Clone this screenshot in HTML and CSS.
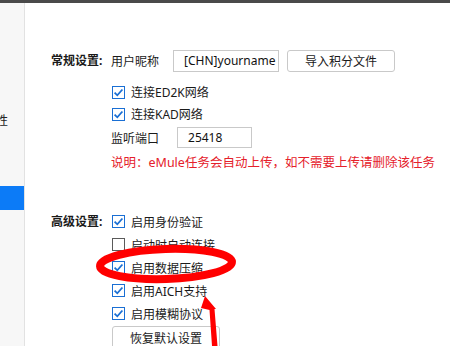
FILE: index.html
```html
<!DOCTYPE html>
<html lang="zh-CN">
<head>
<meta charset="utf-8">
<title>eMule 设置</title>
<link rel="stylesheet" href="styles.css">
</head>
<body>
<div class="topbar"></div>
<div class="window">
  <aside class="sidebar">
    <div class="side-item"><span>属性</span></div>
    <div class="side-item active"></div>
  </aside>
  <main class="main">
    <section class="section general">
      <div class="sec-label">常规设置:</div>
      <div class="sec-body">
        <div class="row row-first">
          <span class="field-label">用户昵称</span>
          <div class="input nick">[CHN]yourname</div>
          <button class="btn import">导入积分文件</button>
        </div>
        <label class="check-row"><span class="cb on"><svg viewBox="0 0 13 13"><rect x="0.5" y="0.5" width="12" height="12"/><path d="M2.6 6.6 L5.3 9.3 L10.4 3.5"/></svg></span>连接ED2K网络</label>
        <label class="check-row"><span class="cb on"><svg viewBox="0 0 13 13"><rect x="0.5" y="0.5" width="12" height="12"/><path d="M2.6 6.6 L5.3 9.3 L10.4 3.5"/></svg></span>连接KAD网络</label>
        <div class="row row-port">
          <span class="field-label">监听端口</span>
          <div class="input port">25418</div>
        </div>
        <p class="note">说明：eMule任务会自动上传，如不需要上传请删除该任务</p>
      </div>
    </section>
    <section class="section advanced">
      <div class="sec-label adv">高级设置:</div>
      <div class="sec-body">
        <label class="check-row adv-row"><span class="cb on"><svg viewBox="0 0 13 13"><rect x="0.5" y="0.5" width="12" height="12"/><path d="M2.6 6.6 L5.3 9.3 L10.4 3.5"/></svg></span>启用身份验证</label>
        <label class="check-row adv-row"><span class="cb off"><svg viewBox="0 0 13 13"><rect x="0.5" y="0.5" width="12" height="12"/></svg></span>启动时自动连接</label>
        <label class="check-row adv-row"><span class="cb on"><svg viewBox="0 0 13 13"><rect x="0.5" y="0.5" width="12" height="12"/><path d="M2.6 6.6 L5.3 9.3 L10.4 3.5"/></svg></span>启用数据压缩</label>
        <label class="check-row adv-row"><span class="cb on"><svg viewBox="0 0 13 13"><rect x="0.5" y="0.5" width="12" height="12"/><path d="M2.6 6.6 L5.3 9.3 L10.4 3.5"/></svg></span>启用AICH支持</label>
        <label class="check-row adv-row"><span class="cb on"><svg viewBox="0 0 13 13"><rect x="0.5" y="0.5" width="12" height="12"/><path d="M2.6 6.6 L5.3 9.3 L10.4 3.5"/></svg></span>启用模糊协议</label>
        <button class="btn reset">恢复默认设置</button>
      </div>
    </section>
  </main>
</div>
<svg class="annot" viewBox="0 0 450 346" width="450" height="346">
  <ellipse cx="166" cy="264" rx="66" ry="15" transform="rotate(-1.8 166 264)" fill="none" stroke="#ff0000" stroke-width="8"/>
  <polygon points="205,296 216,309 214.5,309 217.5,346 212,346 209.5,310 201,308" fill="#ff0000"/>
</svg>
</body>
</html>
```

FILE: styles.css
```css
html, body {
  margin: 0;
  padding: 0;
  background: #ffffff;
}
body {
  width: 450px;
  height: 346px;
  overflow: hidden;
  position: relative;
  font-family: "Noto Sans", "Noto Sans CJK SC", sans-serif;
  font-size: 12px;
  color: #1a1a1a;
}
.topbar {
  height: 3px;
  background: #4a4a4a;
}
.window {
  display: flex;
  height: 343px;
}
.sidebar {
  width: 25px;
  flex: none;
  background: #f7f7f7;
  border-right: 1px solid #e2e2e2;
  padding-top: 105px;
  box-sizing: border-box;
  display: flex;
  flex-direction: column;
}
.side-item {
  height: 24px;
  display: flex;
  align-items: center;
  justify-content: flex-end;
  padding-right: 16px;
  overflow: hidden;
  white-space: nowrap;
  color: #222;
}
.side-item span {
  flex: none;
}
.side-item.active {
  margin-top: 54px;
  background: #0c7bf7;
}
.main {
  flex: 1;
  padding-left: 26px;
}
.section {
  display: grid;
  grid-template-columns: 60px auto;
}
.general {
  margin-top: 47px;
}
.advanced {
  margin-top: 38px;
}
.sec-label {
  font-weight: bold;
  height: 22px;
  line-height: 22px;
  color: #1a1a1a;
}
.adv {
  height: 23px;
  line-height: 23px;
}
.sec-body {
  display: flex;
  flex-direction: column;
  align-items: flex-start;
}
.row {
  display: flex;
  align-items: center;
}
.row-first {
  height: 22px;
  margin-bottom: 9px;
}
.field-label {
  color: #1a1a1a;
}
.input {
  box-sizing: border-box;
  border: 1px solid #c9c9c9;
  background: #fff;
  padding-left: 10px;
  overflow: hidden;
  white-space: nowrap;
  color: #111;
}
.nick {
  width: 106px;
  height: 22px;
  line-height: 20px;
  margin-left: 14px;
}
.port {
  width: 75px;
  height: 21px;
  line-height: 19px;
  margin-left: 18px;
}
.btn {
  box-sizing: border-box;
  font: inherit;
  color: #1a1a1a;
  background: #ffffff;
  border: 1px solid #c9c9c9;
  border-radius: 3px;
  padding: 0;
}
.import {
  width: 108px;
  height: 22px;
  margin-left: 8px;
}
.check-row {
  height: 22px;
  display: flex;
  align-items: center;
  gap: 6px;
  margin-left: 1px;
  color: #1a1a1a;
}
.adv-row {
  height: 23px;
}
.cb {
  width: 13px;
  height: 13px;
  display: block;
  flex: none;
}
.cb svg {
  width: 13px;
  height: 13px;
  display: block;
}
.cb rect {
  fill: #ffffff;
  stroke: #1a6fd4;
  stroke-width: 1;
}
.cb path {
  fill: none;
  stroke: #1a6fd4;
  stroke-width: 1.8;
}
.cb.off rect {
  stroke: #5a5a5a;
}
.row-port {
  height: 21px;
  margin-top: 2px;
}
.note {
  margin: 6px 0 0 0;
  height: 18px;
  line-height: 18px;
  color: #e5202a;
  font-size: 12.5px;
  white-space: nowrap;
}
.reset {
  width: 108px;
  height: 24px;
  margin-top: 1px;
  margin-left: 1px;
}
.annot {
  position: absolute;
  left: 0;
  top: 0;
  pointer-events: none;
}
```
